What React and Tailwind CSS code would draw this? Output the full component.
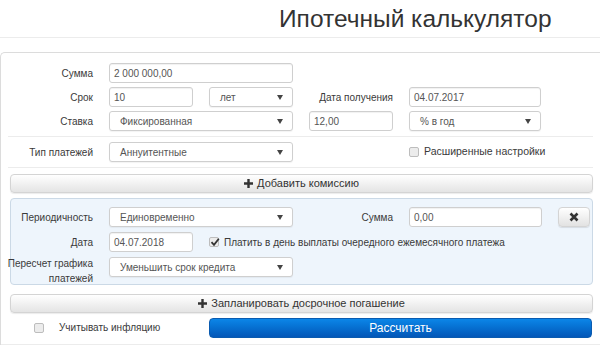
import React from 'react';

const Arrow = () => (
    <svg width="6" height="5" viewBox="0 0 6 5" className="absolute right-[9px] top-[7px]">
        <path d="M0 0 L6 0 L3 5 Z" fill="#444" />
    </svg>
);

const Input = ({ value, className = '' }) => (
    <div className={`h-[20px] flex items-center px-[4px] bg-white border border-[#cfcfcf] rounded-[3px] shadow-[inset_0_1px_1px_rgba(0,0,0,0.06)] text-[#555] ${className}`}>
        {value}
    </div>
);

const Select = ({ value, className = '' }) => (
    <div className={`relative h-[20px] flex items-center pl-[10px] bg-white border border-[#cfcfcf] rounded-[3px] shadow-[0_1px_1px_rgba(0,0,0,0.05)] text-[#555] ${className}`}>
        {value}
        <Arrow />
    </div>
);

const Check = ({ checked }) => (
    <div className="w-[10px] h-[10px] rounded-[2px] border border-[#bdbdbd] bg-[#ececec] relative shrink-0">
        {checked && (
            <svg width="10" height="10" viewBox="0 0 10 10" className="absolute left-[0px] top-[-1px]">
                <path d="M1.5 5.2 L4 7.8 L8.8 1.8" stroke="#333" strokeWidth="1.8" fill="none" />
            </svg>
        )}
    </div>
);

const Plus = () => (
    <svg width="9" height="9" viewBox="0 0 9 9" className="mr-[4px]">
        <path d="M3.3 0 H5.7 V3.3 H9 V5.7 H5.7 V9 H3.3 V5.7 H0 V3.3 H3.3 Z" fill="#333" />
    </svg>
);

const Label = ({ children, className = '' }) => (
    <div className={`flex items-center justify-end text-right text-[#3a3a3a] whitespace-nowrap ${className}`}>{children}</div>
);

const GrayButton = ({ children, className = '' }) => (
    <div className={`h-[19px] flex items-center justify-center rounded-[4px] border border-[#d4d4d4] bg-gradient-to-b from-white to-[#e4e4e4] shadow-[0_1px_1px_rgba(0,0,0,0.08)] text-[#333] text-[11px] ${className}`}>
        {children}
    </div>
);

export default function App() {
    return (
        <div className="w-[600px] h-[356px] bg-white overflow-hidden text-[10px]" style={{ fontFamily: '"Liberation Sans", Arial, sans-serif' }}>
            <div className="h-[38px] border-b border-[#ececec] pl-[279px] pt-[5px]">
                <h1 className="text-[24.5px] leading-[28px] text-[#333] font-normal">Ипотечный калькулятор</h1>
            </div>
            <div className="mt-[14px] border-t border-l border-[#dcdcdc] rounded-tl-[5px] h-[293px] flex flex-col">
                <div className="pt-[10px] grid grid-cols-[92px_84px_84px_84px_132px] gap-x-[16px] gap-y-[4px]">
                    <Label>Сумма</Label>
                    <Input value="2 000 000,00" className="col-span-2" />
                    <div className="col-span-2" />

                    <Label>Срок</Label>
                    <Input value="10" />
                    <Select value="лет" />
                    <Label>Дата получения</Label>
                    <Input value="04.07.2017" />

                    <Label>Ставка</Label>
                    <Select value="Фиксированная" className="col-span-2" />
                    <Input value="12,00" />
                    <Select value="% в год" />
                </div>
                <div className="ml-[7px] w-[585px] border-t border-[#ececec] mt-[5px] mb-[5px]" />
                <div className="grid grid-cols-[92px_84px_84px_84px_132px] gap-x-[16px]">
                    <Label>Тип платежей</Label>
                    <Select value="Аннуитентные" className="col-span-2" />
                    <div />
                    <div className="flex items-center gap-[5px] text-[#3a3a3a] whitespace-nowrap text-[10.5px]">
                        <Check />
                        <span>Расширенные настройки</span>
                    </div>
                </div>
                <div className="ml-[7px] w-[585px] border-t border-[#ececec] mt-[5px] mb-[6px]" />
                <GrayButton className="ml-[9px] w-[583px]">
                    <Plus />
                    Добавить комиссию
                </GrayButton>
                <div className="ml-[9px] w-[583px] mt-[5px] h-[87px] rounded-[4px] border border-[#cbd9e6] bg-[#eef5fc] pt-[8px]">
                    <div className="grid grid-cols-[82px_84px_84px_84px_133px_32px] gap-x-[16px] gap-y-[5px]">
                        <Label>Периодичность</Label>
                        <Select value="Единовременно" className="col-span-2" />
                        <Label>Сумма</Label>
                        <Input value="0,00" />
                        <div className="h-[20px] flex items-center justify-center rounded-[4px] border border-[#d4d4d4] bg-gradient-to-b from-white to-[#e2e2e2] shadow-[0_1px_1px_rgba(0,0,0,0.1)]">
                            <svg width="10" height="10" viewBox="0 0 10 10">
                                <path d="M1.5 1.5 L8.5 8.5 M8.5 1.5 L1.5 8.5" stroke="#333" strokeWidth="2.6" />
                            </svg>
                        </div>

                        <Label>Дата</Label>
                        <Input value="04.07.2018" />
                        <div className="col-span-4 flex items-center gap-[5px] text-[#3a3a3a] whitespace-nowrap">
                            <Check checked />
                            <span>Платить в день выплаты очередного ежемесячного платежа</span>
                        </div>

                        <Label className="h-[30px] -mt-[1px] leading-[15px]">Пересчет графика<br />платежей</Label>
                        <Select value="Уменьшить срок кредита" className="col-span-2" />
                    </div>
                </div>
                <GrayButton className="ml-[9px] w-[583px] mt-[9px]">
                    <Plus />
                    Запланировать досрочное погашение
                </GrayButton>
                <div className="mt-[4px] flex items-center h-[21px]">
                    <div className="ml-[33px]"><Check /></div>
                    <span className="ml-[15px] text-[#3a3a3a]">Учитывать инфляцию</span>
                    <div className="ml-auto mr-[8px] w-[383px] h-[20px] rounded-[4px] bg-gradient-to-b from-[#0c86e8] to-[#0457b8] border border-[#0a5bb0] flex items-center justify-center text-white text-[12px]">
                        Рассчитать
                    </div>
                </div>
                <div className="mt-auto border-b border-[#ececec]" />
            </div>
        </div>
    );
}
